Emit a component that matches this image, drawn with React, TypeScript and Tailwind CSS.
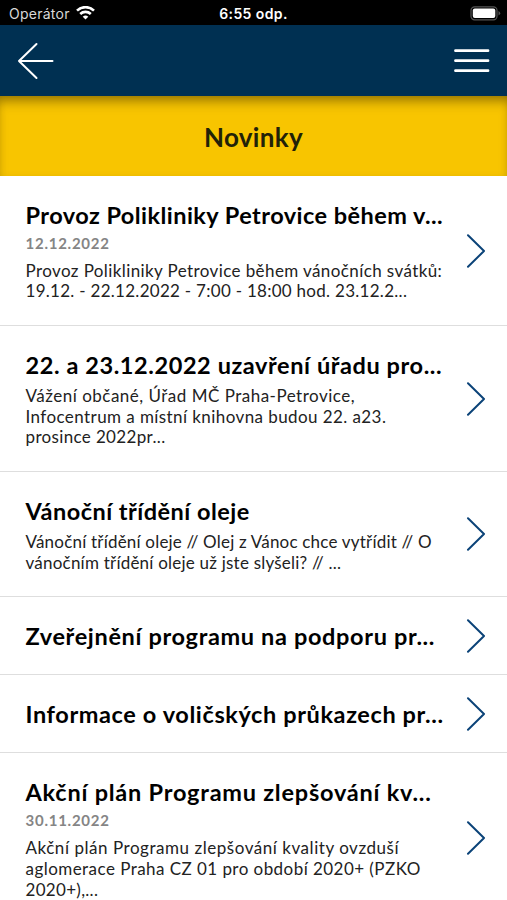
import React from 'react';
import clsx from 'clsx';

interface NewsItem {
  title: string;
  titleClass: string;
  date?: string;
  lines?: { text: string; className: string }[];
}

const news: NewsItem[] = [
  {
    title: 'Provoz Polikliniky Petrovice během v...',
    titleClass: 'tracking-[0.45px]',
    date: '12.12.2022',
    lines: [
      { text: 'Provoz Polikliniky Petrovice během vánočních svátků:', className: 'tracking-[0.4px]' },
      { text: '19.12. - 22.12.2022 - 7:00 - 18:00 hod. 23.12.2...', className: 'tracking-[0.28px]' },
    ],
  },
  {
    title: '22. a 23.12.2022 uzavření úřadu pro...',
    titleClass: 'tracking-[0.59px]',
    lines: [
      { text: 'Vážení občané, Úřad MČ Praha-Petrovice,', className: 'tracking-[0.5px]' },
      { text: 'Infocentrum a místní knihovna budou 22. a23.', className: 'tracking-[0.42px]' },
      { text: 'prosince 2022pr...', className: 'tracking-[0.35px]' },
    ],
  },
  {
    title: 'Vánoční třídění oleje',
    titleClass: 'tracking-[0.48px]',
    lines: [
      { text: 'Vánoční třídění oleje // Olej z Vánoc chce vytřídit // O', className: 'tracking-[0.2px]' },
      { text: 'vánočním třídění oleje už jste slyšeli? // ...', className: 'tracking-[0.22px]' },
    ],
  },
  { title: 'Zveřejnění programu na podporu pr...', titleClass: 'tracking-[0.65px]' },
  { title: 'Informace o voličských průkazech pr...', titleClass: 'tracking-[0.61px]' },
  {
    title: 'Akční plán Programu zlepšování kv...',
    titleClass: 'tracking-[0.77px]',
    date: '30.11.2022',
    lines: [
      { text: 'Akční plán Programu zlepšování kvality ovzduší', className: 'tracking-[0.54px]' },
      { text: 'aglomerace Praha CZ 01 pro období 2020+ (PZKO', className: 'tracking-[0.45px]' },
      { text: '2020+),...', className: 'tracking-[0.3px]' },
    ],
  },
];

const StatusBar: React.FC = () => (
  <div className="grid h-[25px] grid-cols-3 items-center bg-black pt-[2px] font-['Inter',sans-serif] text-white">
    <div className="flex items-center gap-[6px] pl-[9px]">
      <span className="text-[14px] leading-5 tracking-[0.25px] text-[#d8d8d8]">Operátor</span>
      <svg className="-mt-px" width="19" height="14" viewBox="0 0 19 14" fill="none" stroke="white" strokeWidth="2.6">
        <path d="M1 4.6a12.2 12.2 0 0 1 17 0" />
        <path d="M4.2 8a7.7 7.7 0 0 1 10.600 0" />
        <path d="M9.5 13.6 6.7 10.8a4 4 0 0 1 5.6 0z" fill="white" stroke="none" />
      </svg>
    </div>
    <span className="text-center text-[14px] leading-5 font-semibold tracking-[0.4px]">6:55 odp.</span>
    <div className="-mt-px flex justify-end pr-[6px]">
      <svg width="31" height="15" viewBox="0 0 31 15">
        <rect x="1" y="0.8" width="26" height="13" rx="3.6" fill="none" stroke="#555" strokeWidth="1.2" />
        <rect x="2.8" y="2.5" width="22.5" height="9.6" rx="2" fill="white" />
        <path d="M28.5 5v4.6q1.7-.8 1.7-2.3t-1.7-2.3z" fill="#555" />
      </svg>
    </div>
  </div>
);

const NewsRow: React.FC<{ item: NewsItem }> = ({ item }) => (
  <li className="flex items-center justify-between border-b border-[#dedede] pt-[25px] pr-[21px] pb-[22.900px] pl-[25.5px]">
    <div className="whitespace-nowrap">
      <h2 className={clsx('text-[23.5px] leading-[29px] font-bold text-black', item.titleClass)}>{item.title}</h2>
      {item.date && (
        <p className="mt-[3px] mb-[1.2px] text-[15px] leading-[21px] font-bold tracking-[0.75px] text-[#858585]">{item.date}</p>
      )}
      {item.lines && (
        <div className="pt-[5.4px] text-[17px] leading-[20.9px] text-[#222]">
          {item.lines.map((line) => (
            <p key={line.text} className={line.className}>{line.text}</p>
          ))}
        </div>
      )}
    </div>
    <svg className="-mt-3.5 -mb-3 shrink-0" width="20" height="34" viewBox="0 0 20 34" fill="none" stroke="#0b4378" strokeWidth="2">
      <path d="M2 1.2 18 17 2 32.8" strokeLinecap="round" strokeLinejoin="round" />
    </svg>
  </li>
);

const App: React.FC = () => {
  return (
    <div className="h-[900px] w-[507px] overflow-hidden bg-white font-['Lato',sans-serif]">
      <StatusBar />
      <header className="flex h-[71px] items-center justify-between bg-[#003052] px-[17px]">
        <svg width="38" height="38" viewBox="0 0 38 38" fill="none" stroke="white" strokeWidth="2" strokeLinecap="round" strokeLinejoin="round">
          <path d="M19.5 2 2 19l17.5 17M2 19h33.500" />
        </svg>
        <svg width="37" height="26" viewBox="0 0 37 26" stroke="white" strokeWidth="2.8" strokeLinecap="round">
          <path d="M2.500 2.700h32.500M2.500 12.700h32.500M2.500 22.700h32.500" />
        </svg>
      </header>
      <div className="flex h-20 items-center justify-center bg-[#f8c500] pt-[2px] shadow-[inset_0_10px_12px_-5px_rgba(60,45,0,0.5),inset_0_0_6px_rgba(90,65,0,0.1)]">
        <h1 className="text-[26px] font-bold tracking-[0.3px] text-[#222208]">Novinky</h1>
      </div>
      <ul>
        {news.map((item) => (
          <NewsRow key={item.title} item={item} />
        ))}
      </ul>
    </div>
  );
};

export default App;
